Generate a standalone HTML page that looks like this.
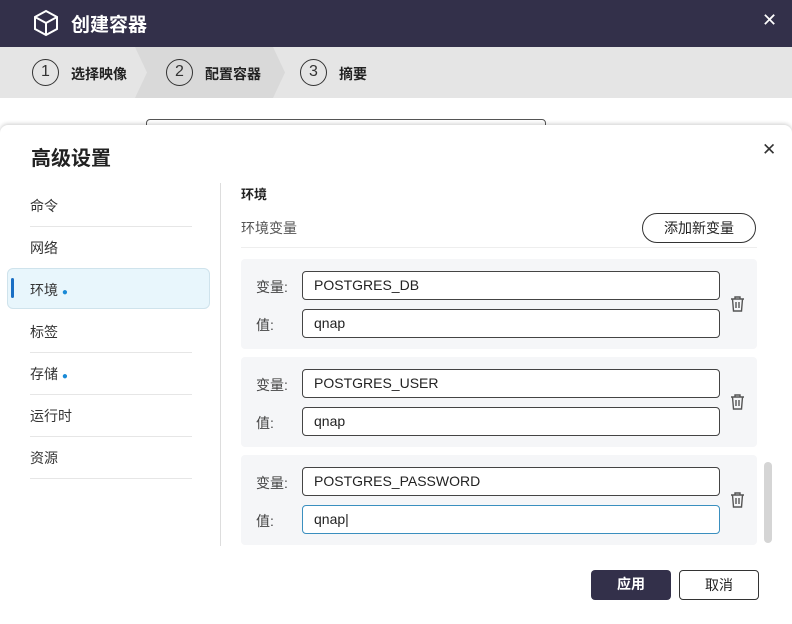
<!DOCTYPE html>
<html><head><meta charset="utf-8"><style>
*{box-sizing:border-box;margin:0;padding:0}
body{width:792px;height:624px;overflow:hidden;position:relative;background:#fff;font-family:"Liberation Sans","Noto Sans CJK SC",sans-serif;color:#222}
.abs{position:absolute}
.hdr{left:0;top:0;width:792px;height:47px;background:#33304a;color:#fff}
.steps{left:0;top:47px;width:792px;height:51px;background:#e5e5e5}
.circ{width:27px;height:27px;border:1.5px solid #333;border-radius:50%;text-align:center;line-height:24px;font-size:16px;color:#333}
.st{font-size:14px;font-weight:bold;color:#222}
.modal{left:0;top:125px;width:792px;height:499px;background:#fff;border-radius:8px 8px 0 0;box-shadow:0 -1px 4px rgba(0,0,0,.2)}
.nav{font-size:14px;color:#333;left:30px}
.sep{left:30px;width:162px;height:1px;background:#e6e6e6}
.card{left:241px;width:516px;height:90px;background:#f5f6f8;border-radius:4px}
.inp{left:302px;width:418px;height:29px;border:1px solid #444;border-radius:4px;background:#fff;font-size:14px;line-height:27px;padding-left:11px;color:#222}
.lbl{left:256px;font-size:14px;color:#444}
.btn{height:30px;border-radius:4px;text-align:center;line-height:28px;font-size:14px}
</style></head><body>
<div class="abs hdr">
<svg class="abs" style="left:32px;top:9px" width="28" height="28" viewBox="0 0 28 28" fill="none" stroke="#fff" stroke-width="2"><path d="M14 2 L25 8 V20 L14 26 L3 20 V8 Z M3 8 L14 14 L25 8 M14 14 V26"/></svg>
<div class="abs" style="left:71px;top:10px;font-size:19px;font-weight:bold">创建容器</div>
<div class="abs" style="left:762px;top:10px;font-size:18px">✕</div>
</div>
<div class="abs steps">
<svg class="abs" style="left:135px;top:0" width="160" height="51"><path d="M0 0 H138 L150 25.5 L138 51 H0 L12 25.5 Z" fill="#d9d9d9"/></svg>
<div class="abs circ" style="left:32px;top:12px">1</div><div class="abs st" style="left:71px;top:17px">选择映像</div>
<div class="abs circ" style="left:166px;top:12px">2</div><div class="abs st" style="left:205px;top:17px">配置容器</div>
<div class="abs circ" style="left:300px;top:12px">3</div><div class="abs st" style="left:339px;top:17px">摘要</div>
</div>
<div class="abs" style="left:146px;top:119px;width:400px;height:20px;border:1px solid #555;border-radius:4px"></div>
<div class="abs modal"></div>
<div class="abs" style="left:31px;top:142px;font-size:20px;font-weight:bold;color:#222">高级设置</div>
<div class="abs" style="left:762px;top:140px;font-size:17px;color:#333">✕</div>
<div class="abs nav" style="top:196px">命令</div><div class="abs sep" style="top:226px"></div>
<div class="abs nav" style="top:238px">网络</div>
<div class="abs" style="left:7px;top:268px;width:203px;height:41px;background:#e8f6fc;border:1px solid #cfe3ec;border-radius:6px"></div>
<div class="abs" style="left:11px;top:278px;width:3px;height:20px;background:#1a6fc4;border-radius:2px"></div>
<div class="abs nav" style="top:280px">环境 <span style="color:#1a8ad6;font-size:10px">●</span></div>
<div class="abs nav" style="top:322px">标签</div><div class="abs sep" style="top:352px"></div>
<div class="abs nav" style="top:364px">存储 <span style="color:#1a8ad6;font-size:10px">●</span></div><div class="abs sep" style="top:394px"></div>
<div class="abs nav" style="top:406px">运行时</div><div class="abs sep" style="top:436px"></div>
<div class="abs nav" style="top:448px">资源</div><div class="abs sep" style="top:478px"></div>
<div class="abs" style="left:220px;top:183px;width:1px;height:363px;background:#ddd"></div>
<div class="abs" style="left:241px;top:184px;font-size:13px;font-weight:bold;color:#222">环境</div>
<div class="abs" style="left:241px;top:218px;font-size:14px;color:#555">环境变量</div>
<div class="abs btn" style="left:642px;top:213px;width:114px;border:1px solid #333;border-radius:15px;color:#222">添加新变量</div>
<div class="abs" style="left:241px;top:247px;width:516px;height:1px;background:#eee"></div>

<div class="abs card" style="top:259px"></div>
<div class="abs lbl" style="top:277px">变量:</div><div class="abs inp" style="top:271px">POSTGRES_DB</div>
<div class="abs lbl" style="top:315px">值:</div><div class="abs inp" style="top:309px">qnap</div>
<div class="abs card" style="top:357px"></div>
<div class="abs lbl" style="top:375px">变量:</div><div class="abs inp" style="top:369px">POSTGRES_USER</div>
<div class="abs lbl" style="top:413px">值:</div><div class="abs inp" style="top:407px">qnap</div>
<div class="abs card" style="top:455px"></div>
<div class="abs lbl" style="top:473px">变量:</div><div class="abs inp" style="top:467px">POSTGRES_PASSWORD</div>
<div class="abs lbl" style="top:511px">值:</div><div class="abs inp" style="top:505px;border-color:#3a8fbf">qnap|</div>

<svg class="abs" style="left:729px;top:295px" width="17" height="18" viewBox="0 0 17 18" fill="none" stroke="#555" stroke-width="1.4"><path d="M2 4 H15 M6 4 V2 H11 V4 M3.5 4 L4.5 16 H12.5 L13.5 4 M7 7 V13 M10 7 V13"/></svg>
<svg class="abs" style="left:729px;top:393px" width="17" height="18" viewBox="0 0 17 18" fill="none" stroke="#555" stroke-width="1.4"><path d="M2 4 H15 M6 4 V2 H11 V4 M3.5 4 L4.5 16 H12.5 L13.5 4 M7 7 V13 M10 7 V13"/></svg>
<svg class="abs" style="left:729px;top:491px" width="17" height="18" viewBox="0 0 17 18" fill="none" stroke="#555" stroke-width="1.4"><path d="M2 4 H15 M6 4 V2 H11 V4 M3.5 4 L4.5 16 H12.5 L13.5 4 M7 7 V13 M10 7 V13"/></svg>
<div class="abs" style="left:764px;top:462px;width:8px;height:81px;background:#d5d5d5;border-radius:4px"></div>

<div class="abs btn" style="left:591px;top:570px;width:80px;background:#33304a;color:#fff;font-weight:bold">应用</div>
<div class="abs btn" style="left:679px;top:570px;width:80px;border:1px solid #333;color:#222">取消</div>
</body></html>
